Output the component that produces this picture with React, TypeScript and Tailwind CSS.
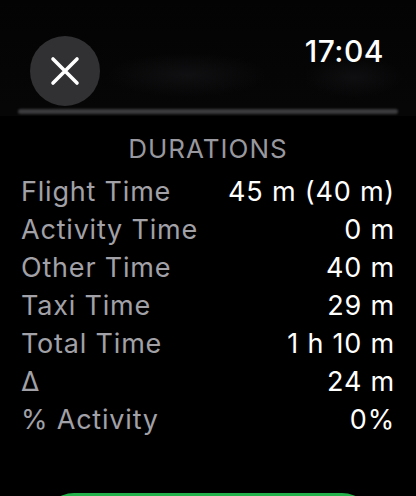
import React from "react";

const rows: [string, string][] = [
  ["Flight Time", "45 m (40 m)"],
  ["Activity Time", "0 m"],
  ["Other Time", "40 m"],
  ["Taxi Time", "29 m"],
  ["Total Time", "1 h 10 m"],
  ["Δ", "24 m"],
  ["% Activity", "0%"],
];

export default function App() {
  return (
    <div className="w-[416px] h-[496px] bg-black overflow-hidden flex flex-col font-['Inter','Noto_Sans',sans-serif] antialiased">
      <div className="h-[107px] shrink-0 flex items-start justify-between pl-[30px] pr-[32px] bg-[radial-gradient(ellipse_80px_22px_at_45%_70%,#101012_0%,transparent_100%),radial-gradient(ellipse_50px_20px_at_85%_72%,#0f0f11_0%,transparent_100%),linear-gradient(#030303,#060607)]">
        <div className="mt-[36px] w-[70px] h-[70px] rounded-full bg-[#313133] flex items-center justify-center">
          <svg width="30" height="30" viewBox="0 0 30 30" fill="none">
            <path d="M3 3 L27 27 M27 3 L3 27" stroke="white" strokeWidth="3.6" strokeLinecap="round" />
          </svg>
        </div>
        <div className="mt-[33px] text-white text-[30px] leading-[36px] font-medium tracking-[0.5px]">17:04</div>
      </div>
      <div className="h-[9px] shrink-0 bg-[#060607] flex items-center px-[18px]">
        <div className="h-[5px] w-full rounded-full bg-[#3b3b3e] blur-[1px]" />
      </div>
      <div className="mt-[18px] text-center text-[#98989e] text-[26px] leading-[30px] tracking-[1px]">DURATIONS</div>
      <div className="mt-[9px] px-[21px] flex flex-col">
        {rows.map(([k, v]) => (
          <div key={k} className="h-[38px] flex items-center justify-between text-[27px] leading-[38px] tracking-[0.8px]">
            <span className="text-[#a1a1a7]">{k}</span>
            <span className="text-white">{v}</span>
          </div>
        ))}
      </div>
      <div className="mt-[54px] mx-[44px] h-[60px] shrink-0 rounded-[30px] bg-[#23b14b]" />
    </div>
  );
}
